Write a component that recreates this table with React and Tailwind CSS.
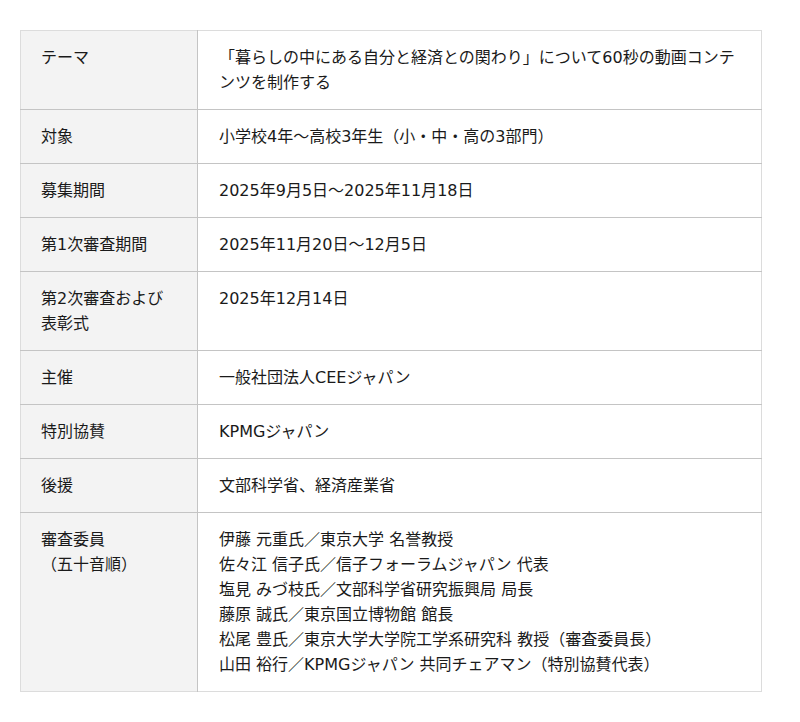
export default function App() {
  const rows = [
    ["テーマ", ["「暮らしの中にある自分と経済との関わり」について60秒の動画コンテンツを制作する"]],
    ["対象", ["小学校4年～高校3年生（小・中・高の3部門）"]],
    ["募集期間", ["2025年9月5日～2025年11月18日"]],
    ["第1次審査期間", ["2025年11月20日～12月5日"]],
    ["第2次審査および\n表彰式", ["2025年12月14日"]],
    ["主催", ["一般社団法人CEEジャパン"]],
    ["特別協賛", ["KPMGジャパン"]],
    ["後援", ["文部科学省、経済産業省"]],
    [
      "審査委員\n（五十音順）",
      [
        "伊藤 元重氏／東京大学 名誉教授",
        "佐々江 信子氏／信子フォーラムジャパン 代表",
        "塩見 みづ枝氏／文部科学省研究振興局 局長",
        "藤原 誠氏／東京国立博物館 館長",
        "松尾 豊氏／東京大学大学院工学系研究科 教授（審査委員長）",
        "山田 裕行／KPMGジャパン 共同チェアマン（特別協賛代表）",
      ],
    ],
  ];
  return (
    <div
      className="bg-white pt-[30px] pl-[20px] min-h-[722px] text-[16px] leading-[25px] text-[#1a1a1a]"
      style={{ fontFamily: '"DejaVu Sans", "Noto Sans CJK JP", sans-serif' }}
    >
      <table className="w-[742px] border-collapse border border-[#dcdcdc]">
        <tbody>
          {rows.map(([label, lines], i) => (
            <tr key={i} className={i > 0 ? "border-t border-[#c4c4c4]" : ""}>
              <th className="w-[177px] bg-[#f3f3f3] align-top text-left font-normal pl-[20px] pr-[10px] py-[14px] border-r border-[#c4c4c4] whitespace-pre-line">
                {label}
              </th>
              <td className="align-top pl-[21px] pr-[20px] py-[14px]">
                {lines.map((l, j) => (
                  <div key={j}>{l}</div>
                ))}
              </td>
            </tr>
          ))}
        </tbody>
      </table>
    </div>
  );
}
